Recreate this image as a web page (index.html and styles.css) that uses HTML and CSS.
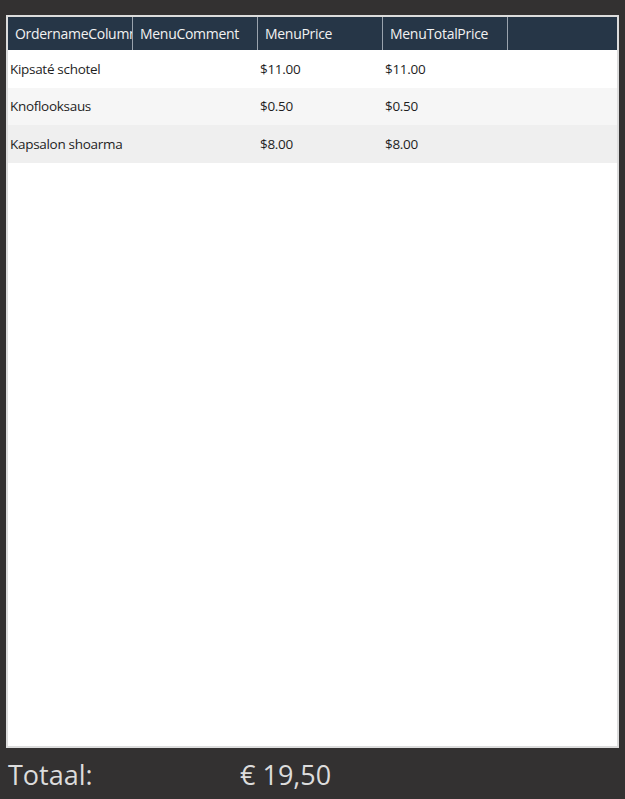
FILE: index.html
```html
<!DOCTYPE html>
<html lang="nl">
<head>
  <meta charset="UTF-8">
  <title>Bestelling</title>
  <link rel="stylesheet" href="styles.css">
</head>
<body>

<div class="grid">
  <div class="rij kop">
    <div class="cel">OrdernameColumn</div>
    <div class="cel">MenuComment</div>
    <div class="cel">MenuPrice</div>
    <div class="cel">MenuTotalPrice</div>
    <div class="cel leeg"></div>
  </div>
  <div class="rij">
    <div class="cel">Kipsaté schotel</div>
    <div class="cel"></div>
    <div class="cel">$11.00</div>
    <div class="cel">$11.00</div>
  </div>
  <div class="rij alt">
    <div class="cel">Knoflooksaus</div>
    <div class="cel"></div>
    <div class="cel">$0.50</div>
    <div class="cel">$0.50</div>
  </div>
  <div class="rij alt2">
    <div class="cel">Kapsalon shoarma</div>
    <div class="cel"></div>
    <div class="cel">$8.00</div>
    <div class="cel">$8.00</div>
  </div>
</div>

<div class="totaal">
  <span class="label">Totaal:</span>
  <span class="bedrag">€ 19,50</span>
</div>

</body>
</html>
```

FILE: styles.css
```css
body { margin: 0; background: #333131; font-family: "Open Sans", "Noto Sans", sans-serif; }
.grid { margin: 15px 6px 0 6px; height: 729px; background: #fff; border: 2px solid #dcdcdc; border-right-width: 2px; }
.rij { display: flex; height: 37.5px; align-items: center; font-size: 13.5px; color: #1e1e1e; }
.rij .cel { width: 125px; flex: none; padding-left: 2px; box-sizing: border-box; white-space: nowrap; overflow: hidden; letter-spacing: -0.3px; }
.alt { background: #f6f6f6; }
.alt2 { background: #efefef; }
.kop { height: 33px; background: #263647; color: #f2f2f2; font-size: 14px; align-items: stretch; }
.kop .cel { padding-left: 7px; border-right: 1px solid #9aa3ad; display: flex; align-items: center; }
.kop .cel.leeg { width: auto; flex: 1; border-right: none; }
.totaal { display: flex; height: 52px; align-items: center; padding-left: 8px; color: #dcdcdc; font-size: 27px; }
.totaal .label { width: 232px; }
```
